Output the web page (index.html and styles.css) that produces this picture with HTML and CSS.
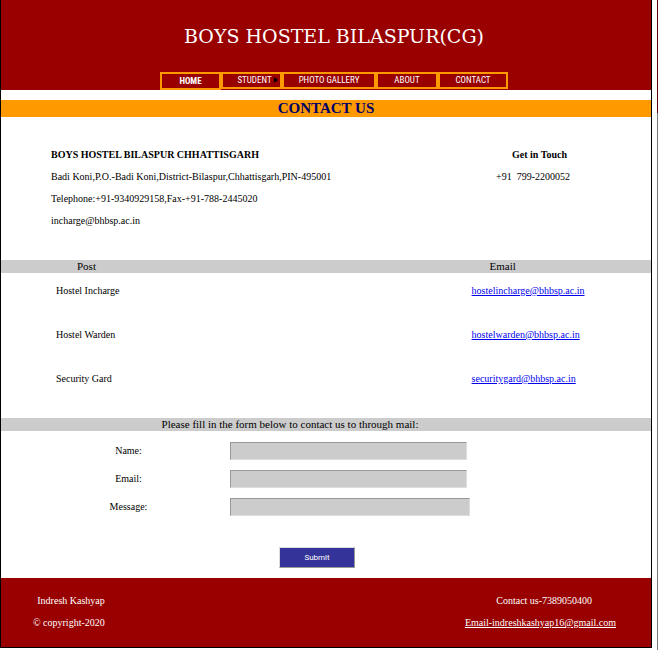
FILE: index.html
```html
<!DOCTYPE html>
<html lang="en">
<head>
<meta charset="utf-8">
<title>Boys Hostel Bilaspur - Contact Us</title>
<link rel="stylesheet" href="styles.css">
</head>
<body>
<div class="page">
  <header class="header">
    <h1 class="site-title">BOYS HOSTEL BILASPUR(CG)</h1>
    <nav class="menu">
      <a class="item item-home" href="#">HOME</a>
      <a class="item item-student" href="#">STUDENT<svg class="arrow" viewBox="0 0 4 6" aria-hidden="true"><path d="M0 0 L4 3 L0 6 Z"/></svg></a>
      <a class="item item-photo" href="#">PHOTO GALLERY</a>
      <a class="item item-about" href="#">ABOUT</a>
      <a class="item item-contact" href="#">CONTACT</a>
    </nav>
  </header>
  <main>
    <h2 class="page-title">CONTACT US</h2>
    <section class="address">
      <div class="postal">
        <h3>BOYS HOSTEL BILASPUR CHHATTISGARH</h3>
        <p>Badi Koni,P.O.-Badi Koni,District-Bilaspur,Chhattisgarh,PIN-495001</p>
        <p>Telephone:+91-9340929158,Fax-+91-788-2445020</p>
        <p>incharge@bhbsp.ac.in</p>
      </div>
      <div class="touch">
        <h3>Get in Touch</h3>
        <p>+91 &nbsp;799-2200052</p>
      </div>
    </section>
    <table class="posts">
      <thead>
        <tr><th class="post">Post</th><th class="email">Email</th></tr>
      </thead>
      <tbody>
        <tr><td class="post">Hostel Incharge</td><td><a href="mailto:hostelincharge@bhbsp.ac.in">hostelincharge@bhbsp.ac.in</a></td></tr>
        <tr><td class="post">Hostel Warden</td><td><a href="mailto:hostelwarden@bhbsp.ac.in">hostelwarden@bhbsp.ac.in</a></td></tr>
        <tr><td class="post">Security Gard</td><td><a href="mailto:securitygard@bhbsp.ac.in">securitygard@bhbsp.ac.in</a></td></tr>
      </tbody>
    </table>
    <h3 class="form-title">Please fill in the form below to contact us to through mail:</h3>
    <form class="form">
      <div class="field"><label for="name">Name:</label><input id="name" type="text"></div>
      <div class="field"><label for="email">Email:</label><input id="email" type="email"></div>
      <div class="field"><label for="message">Message:</label><input id="message" class="wide" type="text"></div>
      <button class="submit" type="submit">Submit</button>
    </form>
  </main>
  <footer class="footer">
    <div class="credit">
      <p>Indresh Kashyap</p>
      <p>© copyright-2020</p>
    </div>
    <div class="reach">
      <p>&nbsp;&nbsp;&nbsp;Contact us-7389050400</p>
      <p><a href="mailto:indreshkashyap16@gmail.com">Email-indreshkashyap16@gmail.com</a></p>
    </div>
  </footer>
</div>
</body>
</html>
```
FILE: styles.css
```css
* { box-sizing: border-box; }
html { min-height: 100%; background: #fff linear-gradient(#600 0 113px, #777 113px) right top / 1px 100% no-repeat; }
body { margin: 0; font: 10px/22px "Liberation Serif", serif; color: #000; }
h1, h2, h3, p { margin: 0; }
.page { margin-right: 6px; border: 1px solid #000; border-top: 0; }

.header { height: 90px; padding-left: 16px; background: #900; }
.site-title { text-align: center; color: #fff; font: 400 19px/72px "DejaVu Serif", serif; }
.menu { display: flex; justify-content: center; align-items: flex-start; }
.item { height: 17px; border: 2px solid #f90; color: #fff; text-align: center; text-decoration: none; font: 9px/13px "Roboto Condensed", "Open Sans Condensed", Roboto, sans-serif; white-space: nowrap; }
.item-home { width: 61px; height: 18px; line-height: 15px; font-weight: 700; }
.item-student { width: 61px; padding-left: 12px; }
.item-photo { width: 94px; }
.item-about { width: 62px; }
.item-contact { width: 70px; }
.arrow { width: 4px; height: 6px; margin-left: 2px; fill: #000; }

.page-title { margin-top: 10px; background: #f90; color: #006; text-align: center; font-size: 15px; line-height: 17px; }
.address { display: flex; justify-content: space-between; padding: 27px 81px 28px 50px; }
.address h3 { font-size: 10px; }
.touch { text-align: right; }
.touch h3 { padding-right: 3px; }

.posts { width: 100%; border-collapse: collapse; table-layout: fixed; }
.posts th { padding: 0; background: #ccc; text-align: left; font: 11px/13px "Liberation Serif", serif; }
.posts td { height: 44px; padding: 7px 0 0; vertical-align: top; }
.posts th.post { width: 72.4%; padding-left: 76px; }
.posts th.email { padding-left: 18px; }
.posts td.post { padding-left: 55px; }
.posts a { color: #00e; }

.form-title { margin-top: 13px; padding-right: 72px; background: #ccc; text-align: center; font-size: 11px; font-weight: 400; line-height: 13px; }
.form { padding: 6px 0 10px; }
.field { display: flex; align-items: center; height: 28px; }
.field label { width: 255px; margin-right: -26px; text-align: center; }
.field input { width: 237px; height: 18px; padding: 0 2px; background: #ccc; border: 1px solid; border-color: #999 #ddd #ddd #999; font: inherit; }
.field .wide { width: 240px; }
.submit { display: block; width: 76px; height: 21px; margin: 26px 0 0 278px; padding: 0; background: #339; border: 1px solid; border-color: #ddd #999 #999 #ddd; color: #fff; font: 8px Roboto, sans-serif; }

.footer { display: flex; justify-content: space-between; padding: 12px 35px 13px 32px; background: #900; color: #fff; text-align: center; }
.footer a { color: #fff; }
.credit { text-align: right; }
```
